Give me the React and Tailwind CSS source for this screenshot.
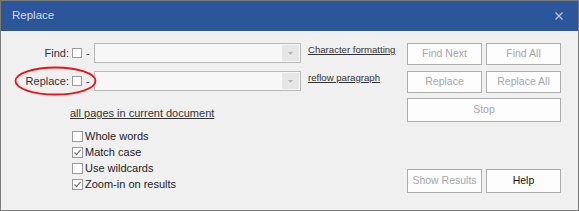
import { useState } from "react";

const font = { fontFamily: '"Liberation Sans", Arial, sans-serif' };

function Check({ checked, label }) {
  return (
    <div className="flex h-[16px] items-center pl-[71px]">
      <span className="flex h-[11px] w-[11px] items-center justify-center border border-[#9a9a9a] bg-white">
        {checked && (
          <svg width="9" height="9" viewBox="0 0 9 9">
            <path d="M1.5 4.5 L3.6 6.6 L7.6 1.8" fill="none" stroke="#6e6e6e" strokeWidth="1.2" />
          </svg>
        )}
      </span>
      <span className="ml-[2px] text-[11px] leading-none text-[#222]">{label}</span>
    </div>
  );
}

function Combo() {
  return (
    <div className="flex h-[20px] w-[207px] border border-[#b9b9b9] bg-[#f7f7f7]">
      <div className="flex-1" />
      <div className="m-[1px] flex w-[17px] items-center justify-center bg-[#e6e6e6]">
        <svg width="5" height="3" viewBox="0 0 5 3">
          <path d="M0 0 H5 L2.5 3 Z" fill="#b5b5b5" />
        </svg>
      </div>
    </div>
  );
}

function Btn({ children, enabled, className = "" }) {
  return (
    <button
      className={
        "flex items-center justify-center border border-[#adadad] bg-[#fdfdfd] text-[10.5px] " +
        (enabled ? "text-[#111] " : "text-[#a6a6a6] ") +
        className
      }
    >
      {children}
    </button>
  );
}

export default function App() {
  const [opts] = useState([
    { label: "Whole words", checked: false },
    { label: "Match case", checked: true },
    { label: "Use wildcards", checked: false },
    { label: "Zoom-in on results", checked: true },
  ]);

  return (
    <div className="flex h-[211px] w-[579px] flex-col border border-[#7a7a7a] bg-[#f0f0f0]" style={font}>
      <div className="flex h-[30px] shrink-0 items-center justify-between bg-[#2b579a] pl-[11px] pr-[15px]">
        <span className="text-[11.5px] text-[#d5dbe8]">Replace</span>
        <svg width="8" height="8" viewBox="0 0 8 8">
          <path d="M0.5 0.5 L7.5 7.5 M7.5 0.5 L0.5 7.5" stroke="#bcc5d8" strokeWidth="1.3" />
        </svg>
      </div>

      <div className="flex flex-1 pt-[12px] pb-[17px]">
        <div className="flex w-[406px] flex-col">
          <div className="flex h-[20px] items-center">
            <span className="w-[68px] text-right text-[11px] text-[#333]">Find:</span>
            <span className="ml-[3px] h-[10px] w-[10px] border border-[#9a9a9a] bg-white" />
            <span className="w-[12px] pl-[4px] text-[11px] text-[#333]">-</span>
            <Combo />
            <a className="ml-[7px] -mt-[6px] text-[9.6px] text-[#333] underline">Character formatting</a>
          </div>

          <div className="relative mt-[8px] flex h-[20px] items-center">
            <span className="w-[68px] text-right text-[11px] text-[#333]">Replace:</span>
            <span className="ml-[3px] h-[10px] w-[10px] border border-[#9a9a9a] bg-white" />
            <span className="w-[12px] pl-[4px] text-[11px] text-[#333]">-</span>
            <Combo />
            <a className="ml-[7px] -mt-[6px] text-[9.6px] text-[#333] underline">reflow paragraph</a>
            <svg className="absolute left-[13px] top-[-5px]" width="83" height="30" viewBox="0 0 83 30">
              <ellipse cx="41.5" cy="15" rx="40" ry="13.5" fill="none" stroke="#e4151b" strokeWidth="1.8" />
            </svg>
          </div>

          <div className="mt-[15px] h-[14px] pl-[69px] text-[11px] leading-[14px] text-[#333]">
            <a className="underline">all pages in current document</a>
          </div>

          <div className="mt-[8px] flex flex-col">
            {opts.map((o) => (
              <Check key={o.label} label={o.label} checked={o.checked} />
            ))}
          </div>
        </div>

        <div className="flex w-[154px] flex-col">
          <div className="grid grid-cols-2 gap-x-[4px] gap-y-[6px]">
            <Btn className="h-[22px]">Find Next</Btn>
            <Btn className="h-[22px]">Find All</Btn>
            <Btn className="h-[22px]">Replace</Btn>
            <Btn className="h-[22px]">Replace All</Btn>
          </div>
          <Btn className="mt-[5px] h-[24px]">Stop</Btn>
          <div className="mt-auto grid grid-cols-2 gap-x-[4px]">
            <Btn className="h-[24px]">Show Results</Btn>
            <Btn className="h-[24px]" enabled>
              Help
            </Btn>
          </div>
        </div>
      </div>
    </div>
  );
}
